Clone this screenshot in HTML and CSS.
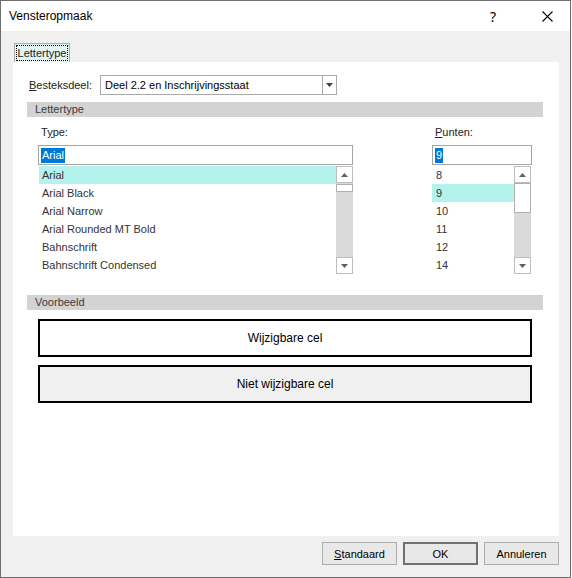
FILE: index.html
```html
<!DOCTYPE html>
<html>
<head>
<meta charset="utf-8">
<link rel="stylesheet" href="styles.css">
</head>
<body>
<div class="window">
  <div class="titlebar">
    <span class="title">Vensteropmaak</span>
    <span class="help">?</span>
    <span class="close"><svg width="11" height="11" viewBox="0 0 11 11"><path d="M0.5 0.5 L10.5 10.5 M10.5 0.5 L0.5 10.5" stroke="#000" stroke-width="1.1" fill="none"/></svg></span>
  </div>
  <div class="client">
    <div class="tabs"><div class="tab"><span class="focus">Lettertype</span></div></div>
    <div class="panel">
      <div class="combo-row">
        <span class="combo-label"><u>B</u>esteksdeel:</span>
        <div class="combo">
          <span class="combo-text">Deel 2.2 en Inschrijvingsstaat</span>
          <span class="combo-btn"><svg width="7" height="4" viewBox="0 0 7 4"><path d="M0 0 H7 L3.5 4 Z" fill="#404040"/></svg></span>
        </div>
      </div>
      <div class="section">Lettertype</div>
      <div class="font-grid">
        <div class="col col-type">
          <div class="field-label">T<u>y</u>pe:</div>
          <div class="textbox"><span class="sel">Arial</span></div>
          <div class="list">
            <div class="items">
              <div class="item selected">Arial</div>
              <div class="item">Arial Black</div>
              <div class="item">Arial Narrow</div>
              <div class="item">Arial Rounded MT Bold</div>
              <div class="item">Bahnschrift</div>
              <div class="item">Bahnschrift Condensed</div>
            </div>
            <div class="sb">
              <div class="arrow"><svg width="7" height="4" viewBox="0 0 7 4"><path d="M0 4 H7 L3.5 0 Z" fill="#606060"/></svg></div>
              <div class="thumb thumb-type"></div>
              <div class="track"></div>
              <div class="arrow"><svg width="7" height="4" viewBox="0 0 7 4"><path d="M0 0 H7 L3.5 4 Z" fill="#606060"/></svg></div>
            </div>
          </div>
        </div>
        <div class="col col-size">
          <div class="field-label"><u>P</u>unten:</div>
          <div class="textbox"><span class="sel">9</span></div>
          <div class="list">
            <div class="items">
              <div class="item">8</div>
              <div class="item selected">9</div>
              <div class="item">10</div>
              <div class="item">11</div>
              <div class="item">12</div>
              <div class="item">14</div>
            </div>
            <div class="sb">
              <div class="arrow"><svg width="7" height="4" viewBox="0 0 7 4"><path d="M0 4 H7 L3.5 0 Z" fill="#606060"/></svg></div>
              <div class="thumb thumb-size"></div>
              <div class="track"></div>
              <div class="arrow"><svg width="7" height="4" viewBox="0 0 7 4"><path d="M0 0 H7 L3.5 4 Z" fill="#606060"/></svg></div>
            </div>
          </div>
        </div>
      </div>
      <div class="section section-preview">Voorbeeld</div>
      <div class="preview editable">Wijzigbare cel</div>
      <div class="preview readonly">Niet wijzigbare cel</div>
    </div>
    <div class="buttons">
      <div class="btn"><u>S</u>tandaard</div>
      <div class="btn btn-default">OK</div>
      <div class="btn">Annuleren</div>
    </div>
  </div>
</div>
</body>
</html>
```
FILE: styles.css
```css
html, body {
  margin: 0;
  padding: 0;
  background: #ffffff;
}
body {
  font-family: "Liberation Sans", Arial, sans-serif;
  font-size: 11px;
  color: #000;
}
.window {
  width: 571px;
  height: 578px;
  box-sizing: border-box;
  border: 1px solid #6e6e6e;
  display: flex;
  flex-direction: column;
  background: #f0f0f0;
}
.titlebar {
  height: 30px;
  flex: none;
  background: #ffffff;
  display: flex;
  align-items: center;
  padding-left: 8px;
}
.title {
  flex: 1;
  font-family: "Liberation Sans", Arial, sans-serif;
  font-size: 12px;
  color: #000;
}
.help {
  width: 46px;
  text-align: center;
  font-family: "Noto Sans", sans-serif;
  font-size: 14px;
}
.close {
  width: 46px;
  margin-left: 8px;
  display: flex;
  justify-content: center;
  align-items: center;
}
.client {
  flex: 1;
  display: flex;
  flex-direction: column;
  padding: 12px 11px 0 12px;
}
.tabs {
  height: 19px;
  display: flex;
}
.tab {
  margin-left: 1px;
  width: 56px;
  height: 19px;
  box-sizing: border-box;
  border: 1px solid #acacac;
  border-bottom: none;
  background: #e3f4f4;
  padding: 1px 1px 0 1px;
}
.focus {
  display: block;
  height: 16px;
  line-height: 15px;
  box-sizing: border-box;
  border: 1px dotted #000;
  text-align: center;
  color: #222;
}
.panel {
  height: 474px;
  background: #ffffff;
  display: flex;
  flex-direction: column;
}
.combo-row {
  margin-top: 13px;
  padding-left: 16px;
  display: flex;
  align-items: center;
}
.combo-label {
  width: 71px;
  color: #222;
}
.combo {
  width: 237px;
  height: 20px;
  box-sizing: border-box;
  border: 1px solid #a9a9a9;
  display: flex;
  align-items: center;
}
.combo-text {
  flex: 1;
  padding-left: 4px;
  color: #000;
}
.combo-btn {
  width: 13px;
  height: 18px;
  border-left: 1px solid #a9a9a9;
  display: flex;
  justify-content: center;
  align-items: center;
}
.section {
  margin: 7px 16px 0 14px;
  height: 15px;
  line-height: 15px;
  background: #d3d3d3;
  padding-left: 8px;
  color: #3a3a3a;
}
.section-preview {
  margin-top: 21px;
}
.font-grid {
  display: flex;
  padding-left: 25px;
}
.col-type {
  width: 315px;
}
.col-size {
  width: 100px;
  margin-left: 79px;
}
.field-label {
  height: 28px;
  box-sizing: border-box;
  padding: 8px 0 0 3px;
  line-height: 14px;
  color: #222;
}
.textbox {
  height: 20px;
  box-sizing: border-box;
  border: 1px solid #a5a5a5;
  padding-left: 2px;
  display: flex;
  align-items: center;
}
.sel {
  background: #0078d7;
  color: #fff;
  line-height: 15px;
  padding: 0 1px;
}
.list {
  margin-top: 1px;
  height: 108px;
  display: flex;
}
.col-size .list {
  width: 99px;
}
.items {
  flex: 1;
}
.item {
  height: 18px;
  line-height: 18px;
  padding-left: 4px;
  color: #333;
}
.col-type .item.selected {
  margin-left: 1px;
  padding-left: 3px;
}
.item.selected {
  background: #b4f2ed;
}
.sb {
  width: 17px;
  display: flex;
  flex-direction: column;
  background: #dadada;
}
.arrow {
  height: 17px;
  box-sizing: border-box;
  background: #ffffff;
  border: 1px solid #bdbdbd;
  display: flex;
  justify-content: center;
  align-items: center;
}
.thumb {
  box-sizing: border-box;
  background: #ffffff;
  border: 1px solid #b0b0b0;
}
.thumb-type {
  height: 8px;
  margin-top: 1px;
}
.thumb-size {
  height: 30px;
}
.track {
  flex: 1;
}
.preview {
  margin-left: 25px;
  width: 494px;
  height: 38px;
  box-sizing: border-box;
  border: 2px solid #000;
  display: flex;
  justify-content: center;
  align-items: center;
  color: #000;
  font-size: 12px;
}
.editable {
  margin-top: 9px;
  background: #fff;
}
.readonly {
  margin-top: 8px;
  background: #f0f0f0;
}
.buttons {
  margin-top: 6px;
  display: flex;
  justify-content: flex-end;
  gap: 6px;
}
.btn {
  width: 75px;
  height: 23px;
  box-sizing: border-box;
  border: 1px solid #adadad;
  background: #e8e8e8;
  display: flex;
  justify-content: center;
  align-items: center;
  color: #000;
}
.btn-default {
  border: 2px solid #707070;
}
```
